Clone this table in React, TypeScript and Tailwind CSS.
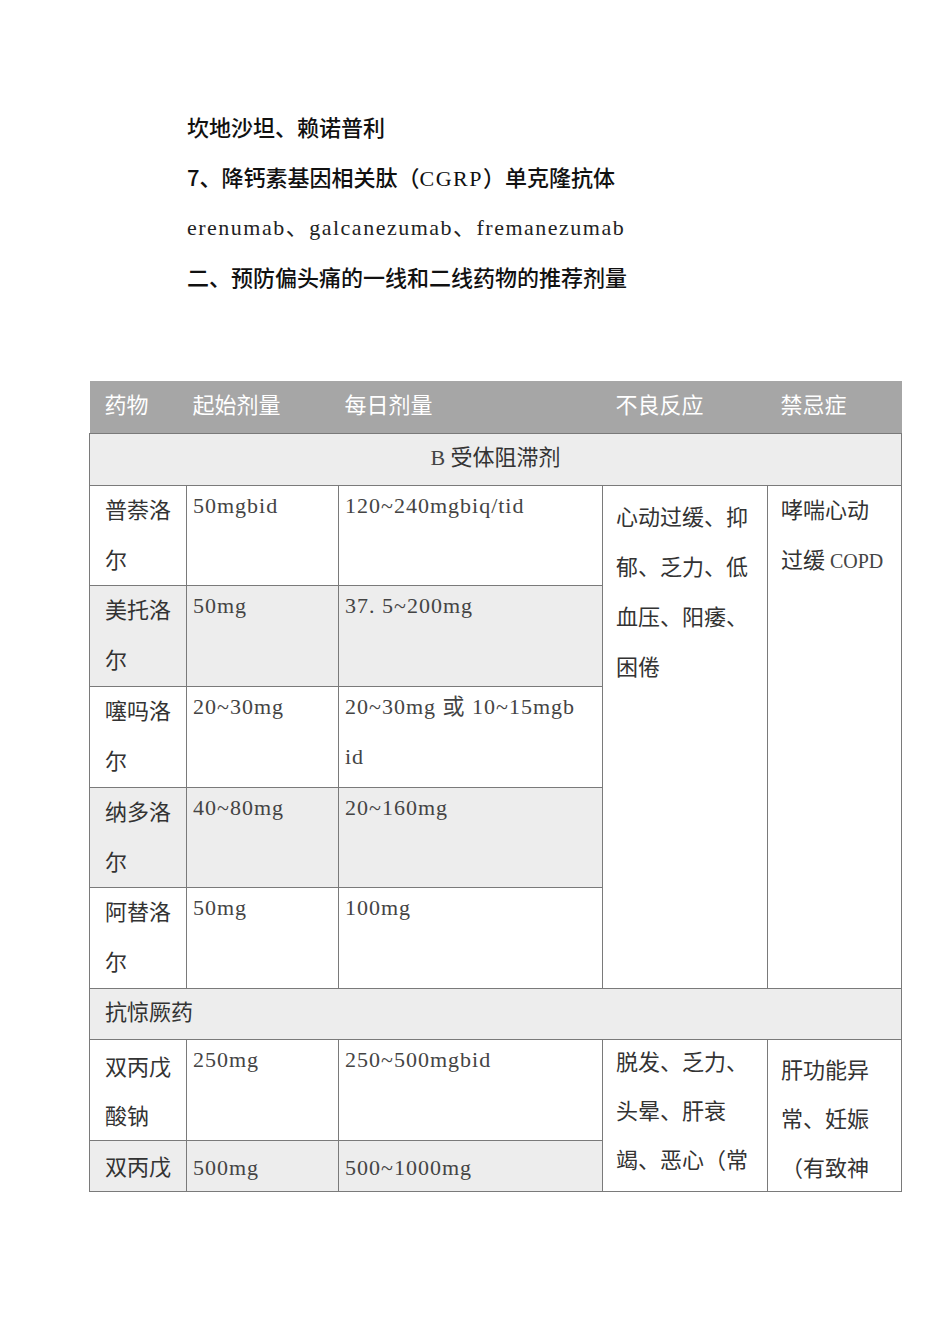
const cjk = '"Noto Sans CJK SC", "Noto Sans CJK JP", sans-serif';
const serif = '"Liberation Serif", "Noto Sans CJK SC", serif';

interface Drug {
  name: string[];
  start: string;
  daily: string[];
  shaded: boolean;
  h: string;
}

const BETA: Drug[] = [
  { name: ['普萘洛', '尔'], start: '50mgbid', daily: ['120~240mgbiq/tid'], shaded: false, h: 'h-[99px]' },
  { name: ['美托洛', '尔'], start: '50mg', daily: ['37. 5~200mg'], shaded: true, h: 'h-[100px]' },
  { name: ['噻吗洛', '尔'], start: '20~30mg', daily: ['20~30mg 或 10~15mgb', 'id'], shaded: false, h: 'h-[100px]' },
  { name: ['纳多洛', '尔'], start: '40~80mg', daily: ['20~160mg'], shaded: true, h: 'h-[99px]' },
  { name: ['阿替洛', '尔'], start: '50mg', daily: ['100mg'], shaded: false, h: 'h-[100px]' },
];

const cell = 'border border-[#7a7a7a] align-top p-0';
const latin = 'text-[22px] tracking-[1px] text-[#444]';

function Lines({ items, lh = 'h-[50px]' }: { items: string[]; lh?: string }) {
  return (
    <>
      {items.map((t, i) => (
        <div key={i} className={`${lh} whitespace-pre`}>{t}</div>
      ))}
    </>
  );
}

// fixed-height cell body; `shift` nudges the text without touching the row height
function Box({ h, className, shift, serifText, children }: {
  h: string; className?: string; shift?: string; serifText?: boolean; children: React.ReactNode;
}) {
  return (
    <div
      className={`${h} overflow-hidden ${className ?? ''}`}
      style={serifText ? { fontFamily: serif } : undefined}
    >
      <div className={shift}>{children}</div>
    </div>
  );
}

export default function App() {
  return (
    <div className="min-h-[1344px] w-[950px] bg-white">
      <div className="pt-[101px] pl-[187px] text-[22px] leading-[50px] text-[#111] font-medium" style={{ fontFamily: cjk }}>
        <p className="h-[50px]">坎地沙坦、赖诺普利</p>
        <p className="h-[50px]">
          7、降钙素基因相关肽（<span style={{ fontFamily: serif }} className="font-normal tracking-[1.5px]">CGRP</span>）单克隆抗体
        </p>
        <p className="h-[50px] pt-[2px] font-normal text-[#222] tracking-[1.5px]" style={{ fontFamily: serif }}>
          erenumab、galcanezumab、fremanezumab
        </p>
        <p className="h-[50px]">二、预防偏头痛的一线和二线药物的推荐剂量</p>
      </div>

      <div className="pl-[89px] pt-[80px]">
        <table className="table-fixed border-collapse w-[812px] text-[22px] leading-[50px] text-[#333]" style={{ fontFamily: cjk }}>
          <colgroup>
            <col className="w-[97px]" />
            <col className="w-[152px]" />
            <col className="w-[264px]" />
            <col className="w-[165px]" />
            <col className="w-[134px]" />
          </colgroup>
          <thead>
            <tr className="bg-[#a6a6a6] text-white">
              {[
                ['药物', 'pl-[15px]'],
                ['起始剂量', 'pl-[6px]'],
                ['每日剂量', 'pl-[6px]'],
                ['不良反应', 'pl-[13px]'],
                ['禁忌症', 'pl-[13px]'],
              ].map(([t, pl]) => (
                <th key={t} className="font-normal text-left p-0 border-b border-[#7a7a7a]">
                  <Box h="h-[52px]" className={pl} shift="-mt-[3px]">{t}</Box>
                </th>
              ))}
            </tr>
          </thead>
          <tbody>
            <tr className="bg-[#ededed]">
              <td colSpan={5} className={`${cell} text-center`}>
                <Box h="h-[51px]" shift="-mt-[4px]">
                  <span style={{ fontFamily: serif }} className="text-[22px] text-[#444]">B </span>受体阻滞剂
                </Box>
              </td>
            </tr>
            {BETA.map((d, i) => (
              <tr key={d.name[0]} className={d.shaded ? 'bg-[#ededed]' : 'bg-white'}>
                <td className={cell}>
                  <Box h={d.h} className="pl-[15px]" shift="-mt-[3px]">
                    <Lines items={d.name} />
                  </Box>
                </td>
                <td className={cell}>
                  <Box h={d.h} className={`pl-[6px] ${latin}`} shift="-mt-[5px]" serifText>
                    {d.start}
                  </Box>
                </td>
                <td className={cell}>
                  <Box h={d.h} className={`pl-[6px] ${latin}`} shift="-mt-[5px]" serifText>
                    <Lines items={d.daily} />
                  </Box>
                </td>
                {i === 0 && (
                  <>
                    <td rowSpan={5} className={`${cell} bg-white`}>
                      <Box h="h-[490px]" className="pl-[13px] pt-[4px]">
                        <Lines items={['心动过缓、抑', '郁、乏力、低', '血压、阳痿、', '困倦']} />
                      </Box>
                    </td>
                    <td rowSpan={5} className={`${cell} bg-white`}>
                      <Box h="h-[490px]" className="pl-[13px]" shift="-mt-[3px]">
                        <div className="h-[50px]">哮喘心动</div>
                        <div className="h-[50px]">
                          过缓 <span style={{ fontFamily: serif }} className="text-[20px] text-[#444]">COPD</span>
                        </div>
                      </Box>
                    </td>
                  </>
                )}
              </tr>
            ))}
            <tr className="bg-[#ededed]">
              <td colSpan={5} className={cell}>
                <Box h="h-[50px]" className="pl-[15px]" shift="-mt-[4px]">抗惊厥药</Box>
              </td>
            </tr>
            <tr className="bg-white">
              <td className={cell}>
                <Box h="h-[100px]" className="pl-[15px]">
                  <Lines items={['双丙戊', '酸钠']} lh="h-[49px]" />
                </Box>
              </td>
              <td className={cell}>
                <Box h="h-[100px]" className={`pl-[6px] ${latin}`} shift="-mt-[5px]" serifText>250mg</Box>
              </td>
              <td className={cell}>
                <Box h="h-[100px]" className={`pl-[6px] ${latin}`} shift="-mt-[5px]" serifText>250~500mgbid</Box>
              </td>
              <td rowSpan={2} className={`${cell} bg-white`}>
                <Box h="h-[150px]" className="pl-[13px] leading-[49px]" shift="-mt-[4px]">
                  <Lines items={['脱发、乏力、', '头晕、肝衰', '竭、恶心（常']} lh="h-[49px]" />
                </Box>
              </td>
              <td rowSpan={2} className={`${cell} bg-white`}>
                <Box h="h-[150px]" className="pl-[13px] pt-[4px] leading-[49px]">
                  <Lines items={['肝功能异', '常、妊娠', '（有致神']} lh="h-[49px]" />
                </Box>
              </td>
            </tr>
            <tr className="bg-[#ededed]">
              <td className={cell}>
                <Box h="h-[50px]" className="pl-[15px]" shift="-mt-[1px]">双丙戊</Box>
              </td>
              <td className={cell}>
                <Box h="h-[50px]" className={`pl-[6px] pt-[2px] ${latin}`} serifText>500mg</Box>
              </td>
              <td className={cell}>
                <Box h="h-[50px]" className={`pl-[6px] pt-[2px] ${latin}`} serifText>500~1000mg</Box>
              </td>
            </tr>
          </tbody>
        </table>
      </div>
    </div>
  );
}
